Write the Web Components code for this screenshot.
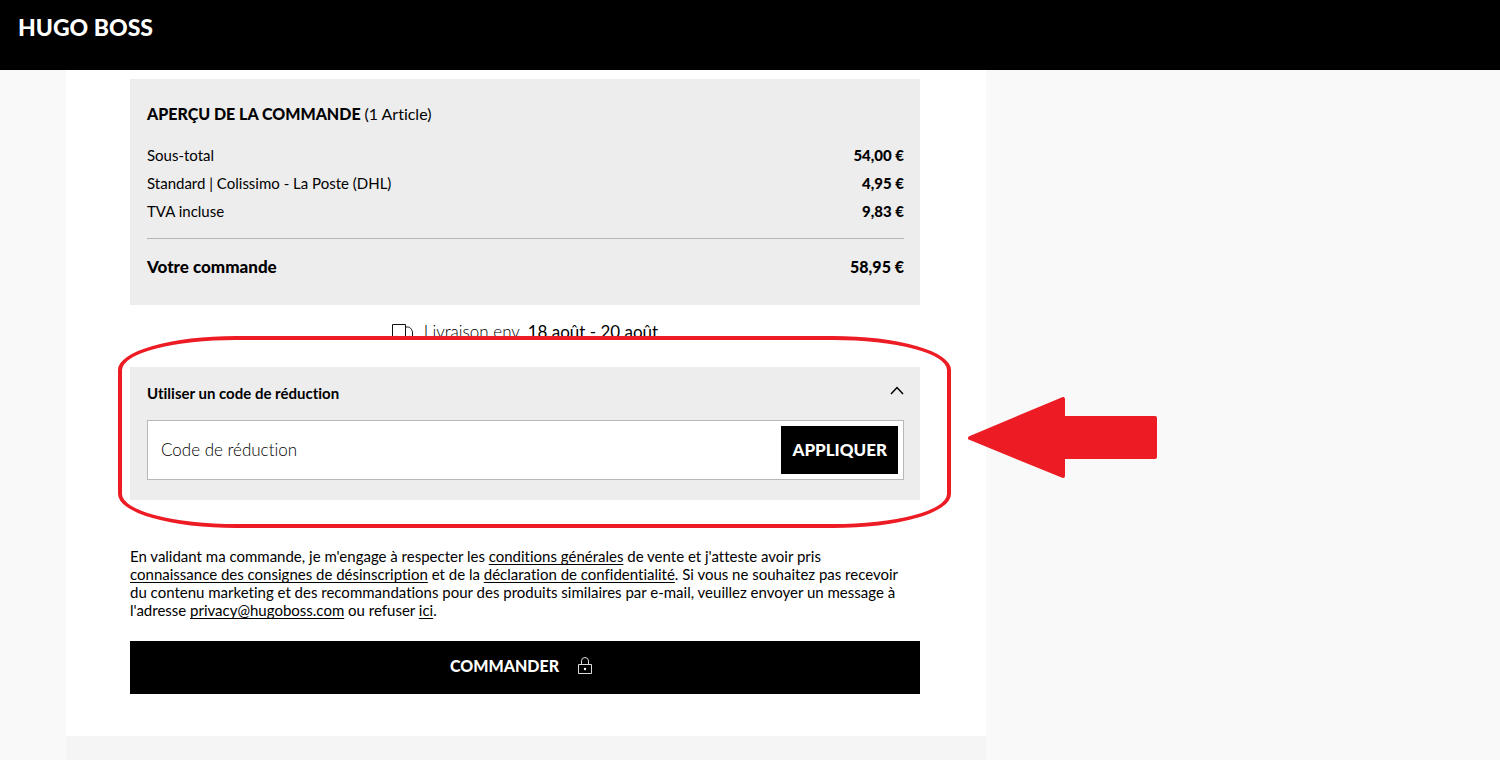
<!DOCTYPE html>
<html lang="fr">
<head>
<meta charset="utf-8">
<meta name="viewport" content="width=device-width, initial-scale=1">
<title>HUGO BOSS – Commande</title>
<style>
  body { margin: 0; background: #f9f9f9; color: #000; font: 15px/18px Lato, "Liberation Sans", sans-serif; font-variant-ligatures: none; }
</style>
</head>
<body>
<checkout-page>
  <site-header slot="header"></site-header>
  <order-summary></order-summary>
  <delivery-note></delivery-note>
  <promo-code></promo-code>
  <legal-note></legal-note>
  <order-button>COMMANDER</order-button>
</checkout-page>

<script>
const define = (name, html, setup) => {
  const template = document.createElement('template');
  template.innerHTML = html;
  customElements.define(name, class extends HTMLElement {
    constructor() {
      super();
      this.attachShadow({ mode: 'open' }).append(template.content.cloneNode(true));
      if (setup) setup(this.shadowRoot);
    }
  });
};

define('checkout-page', `
  <style>
    :host { display: flex; flex-direction: column; min-height: 100vh; overflow: hidden; }
    .columns { flex: 1; display: grid; grid-template-columns: 66fr 920fr 514fr; }
    .center { grid-column: 2; background: #f5f5f5; min-width: 0; }
    main { background: #fff; padding: 9px 66px 42px 64px; }
  </style>
  <slot name="header"></slot>
  <div class="columns"><div class="center"><main><slot></slot></main></div></div>
`);

define('site-header', `
  <style>
    :host { display: block; background: #000; }
    header { box-sizing: border-box; min-height: 70px; padding: 15px 18px; }
    a { color: #fff; text-decoration: none; font-size: 23px; line-height: 24px; font-weight: 900; }
  </style>
  <header><a href="#">HUGO BOSS</a></header>
`);

define('order-summary', `
  <style>
    :host { display: block; background: #ededed; padding: 23px 16px 26px 17px; }
    h2 { margin: 0 0 15px; font-size: 16px; line-height: 24px; font-weight: 900; }
    h2 span { font-weight: 400; }
    table { width: 100%; border-collapse: collapse; }
    th, td { padding: 0; line-height: 28px; font-weight: 400; text-align: left; }
    td { font-weight: 900; text-align: right; }
    tbody tr:last-child > * { padding-bottom: 13px; }
    tfoot tr { border-top: 1px solid #b5b5b5; }
    tfoot tr > * { padding-top: 16px; font-size: 17px; line-height: 24px; font-weight: 900; }
    tfoot td { font-size: 16px; }
  </style>
  <h2>APERÇU DE LA COMMANDE <span>(1 Article)</span></h2>
  <table>
    <tbody>
      <tr><th scope="row">Sous-total</th><td>54,00 €</td></tr>
      <tr><th scope="row">Standard | Colissimo - La Poste (DHL)</th><td>4,95 €</td></tr>
      <tr><th scope="row">TVA incluse</th><td>9,83 €</td></tr>
    </tbody>
    <tfoot><tr><th scope="row">Votre commande</th><td>58,95 €</td></tr></tfoot>
  </table>
`);

define('delivery-note', `
  <style>
    :host { display: flex; justify-content: center; align-items: center; gap: 10px; margin: 15px 0 23px; font-size: 17px; line-height: 24px; }
    svg { display: block; }
    span { font-weight: 300; }
    b { font-weight: 400; }
  </style>
  <svg width="22" height="16" viewBox="0 0 22 16" fill="none" stroke="#111" aria-hidden="true">
    <path d="M3 13.500H.5V.5h13v13H6.500M13.500 3h2c3 0 5 3 5 6v4.500H19"/>
    <path d="M3 14a1.700 1.700 0 0 1 3.400 0 1.700 1.700 0 0 1-3.400 0zM15.500 14a1.700 1.700 0 0 1 3.400 0 1.700 1.700 0 0 1-3.400 0z"/>
  </svg>
  <div><span>Livraison env.</span> <b>18 août - 20 août</b></div>
`);

define('highlight-mark', `
  <style>
    :host { position: absolute; inset: -31px -31px -28px -12px; pointer-events: none; }
    .ring { position: absolute; inset: 0; border: 4px solid #ed1c24; border-radius: 118px / 34px; }
    svg { position: absolute; left: calc(100% + 17px); top: 61px; }
  </style>
  <div class="ring"></div>
  <svg width="190" height="82" viewBox="0 0 190 82" fill="#ed1c24" stroke="#ed1c24" stroke-width="4" stroke-linejoin="round" aria-hidden="true">
    <path d="M2 41 95 2V21H187V60H95V79Z"/>
  </svg>
`);

define('promo-code', `
  <style>
    :host { display: block; position: relative; background: #ededed; padding: 16px 16px 20px 17px; }
    h3 { margin: 0 0 17px; font-size: 15px; line-height: 20px; }
    .toggle { all: unset; width: 100%; display: flex; justify-content: space-between; align-items: center; font-weight: 700; font-variant-ligatures: none; cursor: pointer; }
    .toggle svg { display: block; margin-bottom: 6px; }
    form { display: flex; background: #fff; border: 1px solid #b8b8b8; padding: 5px; margin: 0; }
    input { flex: 1; min-width: 0; border: 0; outline: 0; padding: 0 8px; background: none; font: inherit; font-variant-ligatures: none; font-size: 17px; font-weight: 300; color: #000; }
    input::placeholder { color: #000; opacity: 1; }
    .apply { border: 0; padding: 12px 11px; background: #000; color: #fff; font: inherit; font-size: 17px; line-height: 24px; font-weight: 900; }
  </style>
  <h3><button class="toggle" type="button" aria-expanded="true">Utiliser un code de réduction
    <svg width="14" height="9" viewBox="0 0 14 9" fill="none" stroke="#000" stroke-width="1.500" aria-hidden="true"><path d="M1 8 7 1.500 13 8"/></svg>
  </button></h3>
  <form>
    <input type="text" placeholder="Code de réduction" aria-label="Code de réduction">
    <button class="apply" type="submit">APPLIQUER</button>
  </form>
  <highlight-mark></highlight-mark>
`, root => root.querySelector('form').addEventListener('submit', e => e.preventDefault()));

define('legal-note', `
  <style>
    :host { display: block; margin: 47px 0 22px; }
    p { margin: 0; font-size: 15px; line-height: 18px; }
    a { color: inherit; text-underline-offset: 2px; text-decoration-skip-ink: none; }
  </style>
  <p>En validant ma commande, je m'engage à respecter les <a href="#">conditions générales</a> de vente et j'atteste avoir pris<br>
  <a href="#">connaissance des consignes de désinscription</a> et de la <a href="#">déclaration de confidentialité</a>. Si vous ne souhaitez pas recevoir<br>
  du contenu marketing et des recommandations pour des produits similaires par e-mail, veuillez envoyer un message à<br>
  l'adresse <a href="mailto:privacy@hugoboss.com">privacy@hugoboss.com</a> ou refuser <a href="#">ici</a>.</p>
`);

define('order-button', `
  <style>
    :host { display: block; }
    button { width: 100%; display: flex; justify-content: center; align-items: center; gap: 19px; border: 0; padding: 13px 20px 16px 12px; background: #000; color: #fff; font: inherit; font-size: 16px; line-height: 24px; font-weight: 900; }
  </style>
  <button type="button"><slot></slot>
    <svg width="14" height="18" viewBox="0 0 14 18" fill="none" stroke="#ddd" aria-hidden="true">
      <path d="M.5 7.500h13v9H.5zM3.500 7.500V4a3.500 3.500 0 0 1 7 0v3.500"/><circle cx="7" cy="12" r="1.200" fill="#fff" stroke="none"/>
    </svg>
  </button>
`);
</script>
</body>
</html>
